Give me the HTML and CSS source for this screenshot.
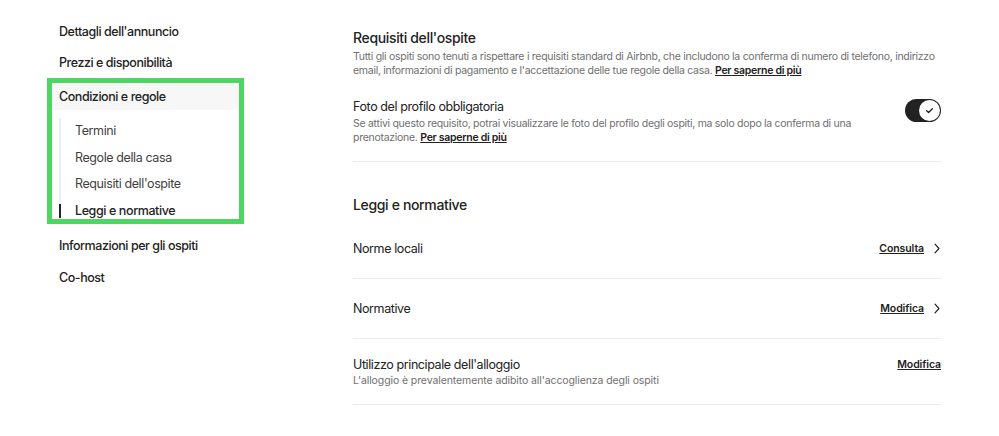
FILE: index.html
```html
<!DOCTYPE html>
<html lang="it">
<head>
<meta charset="utf-8">
<title>Condizioni e regole</title>
<link rel="stylesheet" href="styles.css">
</head>
<body>
<div class="page">
  <nav class="sidebar">
    <a class="nav-item">Dettagli dell'annuncio</a>
    <a class="nav-item nav-short">Prezzi e disponibilità</a>
    <div class="highlight">
      <a class="nav-item nav-current">Condizioni e regole</a>
      <ul class="subnav">
        <li class="sub-item">Termini</li>
        <li class="sub-item">Regole della casa</li>
        <li class="sub-item">Requisiti dell'ospite</li>
        <li class="sub-item sub-active">Leggi e normative</li>
      </ul>
    </div>
    <a class="nav-item nav-after">Informazioni per gli ospiti</a>
    <a class="nav-item">Co-host</a>
  </nav>

  <main class="content">
    <section class="section section-first">
      <h2 class="section-title">Requisiti dell'ospite</h2>
      <p class="desc">Tutti gli ospiti sono tenuti a rispettare i requisiti standard di Airbnb, che includono la conferma di numero di telefono, indirizzo<br>email, informazioni di pagamento e l'accettazione delle tue regole della casa. <a class="more">Per saperne di più</a></p>

      <div class="row row-toggle">
        <div class="row-text">
          <div class="row-title">Foto del profilo obbligatoria</div>
          <p class="desc">Se attivi questo requisito, potrai visualizzare le foto del profilo degli ospiti, ma solo dopo la conferma di una<br>prenotazione. <a class="more">Per saperne di più</a></p>
        </div>
        <button class="toggle" aria-label="Attivo">
          <span class="knob">
            <svg viewBox="0 0 12 12" width="9" height="9"><path d="M2.2 6.3 L4.8 8.7 L9.8 3.6" fill="none" stroke="#222" stroke-width="1.7" stroke-linecap="round" stroke-linejoin="round"/></svg>
          </span>
        </button>
      </div>
    </section>

    <section class="section section-laws">
      <h2 class="section-title">Leggi e normative</h2>
      <div class="row">
        <div class="row-title">Norme locali</div>
        <a class="action">Consulta <svg class="chev" viewBox="0 0 10 14" width="8" height="11"><path d="M2.5 1.5 L7.5 7 L2.5 12.5" fill="none" stroke="#222" stroke-width="1.5" stroke-linecap="round" stroke-linejoin="round"/></svg></a>
      </div>
      <div class="row">
        <div class="row-title">Normative</div>
        <a class="action">Modifica <svg class="chev" viewBox="0 0 10 14" width="8" height="11"><path d="M2.5 1.5 L7.5 7 L2.5 12.5" fill="none" stroke="#222" stroke-width="1.5" stroke-linecap="round" stroke-linejoin="round"/></svg></a>
      </div>
      <div class="row row-two">
        <div class="row-text">
          <div class="row-title">Utilizzo principale dell'alloggio</div>
          <div class="row-sub">L'alloggio è prevalentemente adibito all'accoglienza degli ospiti</div>
        </div>
        <a class="action action-plain">Modifica</a>
      </div>
    </section>
  </main>
</div>
</body>
</html>
```

FILE: styles.css
```css
* { box-sizing: border-box; }
html, body { margin: 0; padding: 0; background: #fff; }
body {
  font-family: Inter, "Noto Sans", sans-serif;
  color: #222;
  width: 999px;
  height: 436px;
  overflow: hidden;
}
.page {
  display: flex;
}
.sidebar {
  width: 353px;
  flex: none;
  padding: 16px 0 0 47px;
  display: flex;
  flex-direction: column;
}
.nav-item {
  display: block;
  height: 32px;
  line-height: 32px;
  padding-left: 12px;
  font-size: 12.5px;
  font-weight: 500;
  letter-spacing: -0.45px;
  color: #222;
}
.nav-short { height: 30px; line-height: 30px; }
.highlight {
  width: 197px;
  height: 146px;
  border: 5px solid #4fd564;
}
.nav-current {
  height: 27px;
  line-height: 27px;
  padding-left: 7px;
  background: #f7f7f7;
}
.nav-after { margin-top: 6px; }
.subnav {
  list-style: none;
  margin: 8px 0 0 7px;
  padding: 0;
  border-left: 2px solid #efefef;
  height: 101px;
}
.sub-item {
  position: relative;
  height: 26.5px;
  line-height: 26.5px;
  padding-left: 14px;
  font-size: 12.5px;
  letter-spacing: -0.4px;
  color: #3f3f3f;
}
.sub-active {
  font-weight: 500;
  color: #222;
}
.sub-active::before {
  content: "";
  position: absolute;
  left: -2px;
  top: 6px;
  width: 2px;
  height: 14px;
  background: #222;
}
.content {
  width: 588px;
  flex: none;
}
.section-first { padding-top: 28px; border-bottom: 1px solid #ebebeb; }
.section-title {
  margin: 0;
  font-size: 14px;
  line-height: 20px;
  font-weight: 500;
  letter-spacing: -0.35px;
}
.desc {
  margin: 2px 0 0;
  font-size: 10.5px;
  line-height: 13.5px;
  color: #6f6f6f;
  letter-spacing: -0.28px;
  white-space: nowrap;
}
.more {
  color: #222;
  font-weight: 600;
  text-decoration: underline;
}
.row {
  display: flex;
  justify-content: space-between;
  align-items: center;
}
.row-toggle {
  align-items: flex-start;
  padding: 21px 0 17px;
}
.row-toggle .desc { margin-top: 1px; }
.row-title {
  font-size: 12.5px;
  line-height: 18px;
  letter-spacing: -0.4px;
}
.toggle {
  margin: 1px 0 0;
  padding: 0;
  width: 36px;
  height: 23px;
  border-radius: 12px;
  border: none;
  background: #222;
  display: flex;
  justify-content: flex-end;
  align-items: center;
  padding-right: 1px;
}
.knob {
  width: 21px;
  height: 21px;
  border-radius: 50%;
  background: #fff;
  display: flex;
  align-items: center;
  justify-content: center;
}
.section-laws { padding-top: 33px; }
.section-laws .section-title { margin-bottom: 4px; }
.section-laws .row {
  height: 60px;
  border-bottom: 1px solid #ebebeb;
}
.section-laws .row.row-two {
  height: 66px;
  align-items: flex-start;
  padding-top: 17px;
}
.row-sub {
  font-size: 10.5px;
  line-height: 14px;
  color: #6f6f6f;
  letter-spacing: -0.1px;
}
.action {
  display: flex;
  align-items: center;
  gap: 9px;
  font-size: 10.5px;
  font-weight: 600;
  color: #222;
  text-decoration: underline;
  letter-spacing: -0.1px;
}
.action-plain { line-height: 18px; }
.chev { display: block; }
```
